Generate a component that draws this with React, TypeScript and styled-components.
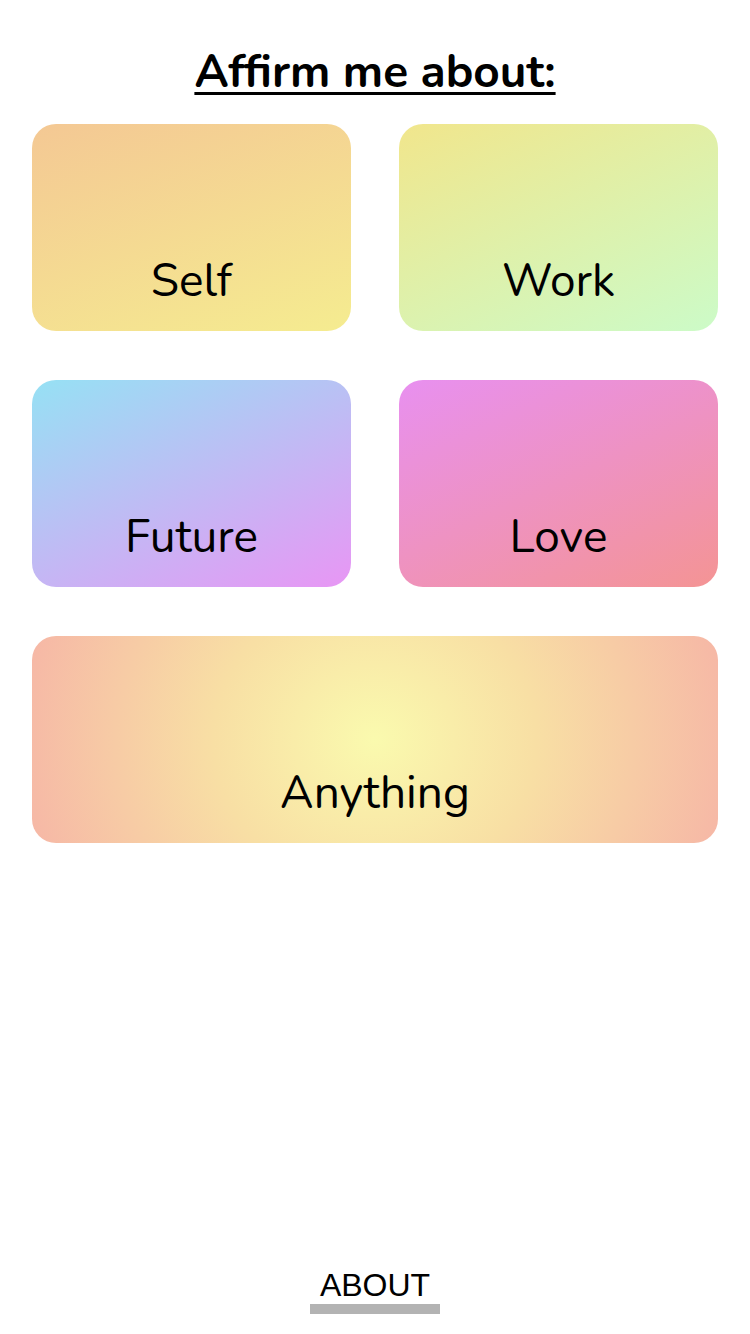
import React from "react";
import styled, { createGlobalStyle } from "styled-components";

const Global = createGlobalStyle`
  html, body { margin: 0; padding: 0; background: #fff; }
  body { font-family: "Nunito", "Lato", "Open Sans", sans-serif; color: #000; }
`;

const Page = styled.div`
  min-height: 1334px;
  box-sizing: border-box;
  display: flex;
  flex-direction: column;
  align-items: stretch;
  padding: 44px 32px 20px;
`;

const Title = styled.h1`
  margin: 0 0 24px;
  text-align: center;
  font-size: 46px;
  font-weight: 700;
  line-height: 56px;
  text-decoration: underline;
  text-decoration-thickness: 3px;
  text-underline-offset: 5px;
`;

const Grid = styled.div`
  display: grid;
  grid-template-columns: 1fr 1fr;
  column-gap: 48px;
  row-gap: 49px;
`;

const Card = styled.button<{ $bg: string; $wide?: boolean }>`
  grid-column: ${(p) => (p.$wide ? "1 / -1" : "auto")};
  height: 207px;
  border: none;
  border-radius: 24px;
  background: ${(p) => p.$bg};
  display: flex;
  align-items: flex-end;
  justify-content: center;
  padding: 0 0 27px;
  font-family: inherit;
  font-size: 46px;
  font-weight: 400;
  line-height: 1;
  color: #000;
  cursor: pointer;
`;

const Footer = styled.footer`
  margin-top: auto;
  display: flex;
  flex-direction: column;
  align-items: center;
`;

const AboutLink = styled.a`
  font-family: "Liberation Sans", Arial, sans-serif;
  font-size: 32px;
  line-height: 36px;
  color: #000;
  text-decoration: none;
  border-bottom: 10px solid #b3b3b3;
  padding: 0 10px 1px;
`;

const cards = [
  { label: "Self", bg: "linear-gradient(160deg, #f4c894 0%, #f5ec90 100%)" },
  { label: "Work", bg: "linear-gradient(155deg, #f1e68c 0%, #ccfbc8 100%)" },
  { label: "Future", bg: "linear-gradient(155deg, #96e1f4 0%, #e896f4 100%)" },
  { label: "Love", bg: "linear-gradient(155deg, #e890f0 0%, #f49494 100%)" },
];

export default function App() {
  return (
    <>
      <Global />
      <Page>
        <Title>Affirm me about:</Title>
        <Grid>
          {cards.map((c) => (
            <Card key={c.label} $bg={c.bg}>
              {c.label}
            </Card>
          ))}
          <Card
            $wide
            $bg="radial-gradient(ellipse 52% 160% at 50% 50%, #fafaae 0%, #f8dfa4 45%, #f6b8a6 100%)"
          >
            Anything
          </Card>
        </Grid>
        <Footer>
          <AboutLink href="#">ABOUT</AboutLink>
        </Footer>
      </Page>
    </>
  );
}
